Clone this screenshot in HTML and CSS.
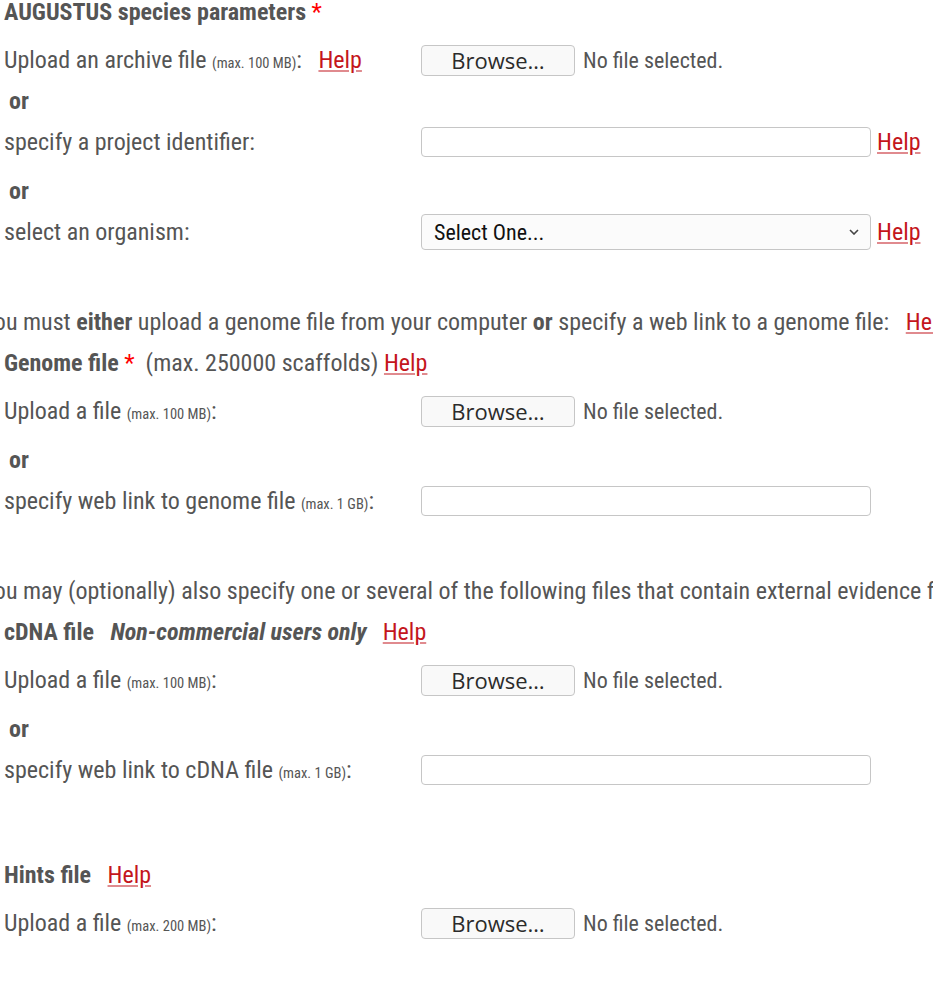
FILE: index.html
```html
<!DOCTYPE html>
<html>
<head>
<meta charset="utf-8">
<link rel="stylesheet" href="styles.css">
</head>
<body>
<div class="page">
  <div class="row head"><div><span class="b">AUGUSTUS species parameters</span> <span class="req">*</span></div></div>
  <div class="row g16">
    <div class="label">Upload an archive file <span class="small">(max. 100 MB)</span>: &nbsp; <a class="help" href="#">Help</a></div>
    <div class="field"><span class="browse">Browse…</span><span class="nofile">No file selected.</span></div>
  </div>
  <div class="row g1"><div class="label or">or</div></div>
  <div class="row g1">
    <div class="label">specify a project identifier:</div>
    <div class="field"><span class="text"></span><a class="help side" href="#">Help</a></div>
  </div>
  <div class="row g9"><div class="label or">or</div></div>
  <div class="row g1">
    <div class="label">select an organism:</div>
    <div class="field"><span class="select">Select One...<svg class="chev" viewBox="0 0 10 6" width="10" height="6"><path d="M1 1 L5 5 L9 1" fill="none" stroke="#444" stroke-width="1.6"/></svg></span><a class="help side" href="#">Help</a></div>
  </div>

  <div class="row para g50"><div>You must <span class="b">either</span> upload a genome file from your computer <span class="b">or</span> specify a web link to a genome file: &nbsp; <a class="help" href="#">Help</a></div></div>
  <div class="row g1"><div class="label wide"><span class="b">Genome file</span> <span class="req">*</span> &nbsp;(max. 250000 scaffolds) <a class="help" href="#">Help</a></div></div>
  <div class="row g8">
    <div class="label">Upload a file <span class="small">(max. 100 MB)</span>:</div>
    <div class="field"><span class="browse">Browse…</span><span class="nofile">No file selected.</span></div>
  </div>
  <div class="row g9"><div class="label or">or</div></div>
  <div class="row g1">
    <div class="label">specify web link to genome file <span class="small">(max. 1 GB)</span>:</div>
    <div class="field"><span class="text"></span></div>
  </div>

  <div class="row para g50"><div>You may (optionally) also specify one or several of the following files that contain external evidence for gene models:</div></div>
  <div class="row g1"><div class="label wide"><span class="b">cDNA file</span> &nbsp; <span class="bi">Non-commercial users only</span> &nbsp;<a class="help gap" href="#">Help</a></div></div>
  <div class="row g8">
    <div class="label">Upload a file <span class="small">(max. 100 MB)</span>:</div>
    <div class="field"><span class="browse">Browse…</span><span class="nofile">No file selected.</span></div>
  </div>
  <div class="row g9"><div class="label or">or</div></div>
  <div class="row g1">
    <div class="label">specify web link to cDNA file <span class="small">(max. 1 GB)</span>:</div>
    <div class="field"><span class="text"></span></div>
  </div>

  <div class="row g65"><div class="label wide"><span class="b">Hints file</span> &nbsp; <a class="help" href="#">Help</a></div></div>
  <div class="row g8">
    <div class="label">Upload a file <span class="small">(max. 200 MB)</span>:</div>
    <div class="field"><span class="browse">Browse…</span><span class="nofile">No file selected.</span></div>
  </div>
</div>
</body>
</html>
```

FILE: styles.css
```css
html, body {
  margin: 0;
  padding: 0;
  background: #fff;
  overflow: hidden;
}
.page {
  width: 933px;
  height: 982px;
  overflow: hidden;
  padding-left: 4px;
  box-sizing: border-box;
  font-family: "Roboto Condensed", Roboto, sans-serif;
  font-size: 24px;
  color: #555;
  white-space: nowrap;
}
.row {
  display: flex;
  align-items: center;
  height: 40px;
}
.row.head { height: 24px; }
.g1 { margin-top: 1px; }
.g8 { margin-top: 8px; }
.g9 { margin-top: 9px; }
.g16 { margin-top: 16px; }
.g50 { margin-top: 50px; }
.g65 { margin-top: 65px; }
.b { font-weight: 700; }
.bi { font-weight: 700; font-style: italic; }
.req { color: #ff0000; }
.small { font-size: 14.5px; }
.label { width: 417px; flex: none; }
.label.wide { width: auto; }
.or { font-weight: 700; padding-left: 5px; }
.para { margin-left: -22px; }
.help { color: #c4161c; text-decoration: underline; text-decoration-color: #e08a8e; }
.help.gap { margin-left: 5px; }
.field { display: flex; align-items: center; }
.browse {
  box-sizing: border-box;
  width: 154px;
  height: 31px;
  border: 1px solid #c6c6c6;
  border-radius: 4px;
  background: #f9f9f9;
  color: #2b2b2b;
  font-family: "Open Sans", sans-serif;
  font-size: 22px;
  display: flex;
  align-items: center;
  justify-content: center;
}
.nofile { margin-left: 8px; font-size: 22px; }
.text {
  box-sizing: border-box;
  width: 450px;
  height: 30px;
  border: 1px solid #c6c6c6;
  border-radius: 4px;
  background: #fff;
}
.select {
  box-sizing: border-box;
  width: 450px;
  height: 36px;
  border: 1px solid #c6c6c6;
  border-radius: 4px;
  background: #fbfbfb;
  color: #111;
  font-size: 22px;
  padding-left: 12px;
  padding-right: 11px;
  display: flex;
  align-items: center;
  justify-content: space-between;
}
.side { margin-left: 6px; }
```
